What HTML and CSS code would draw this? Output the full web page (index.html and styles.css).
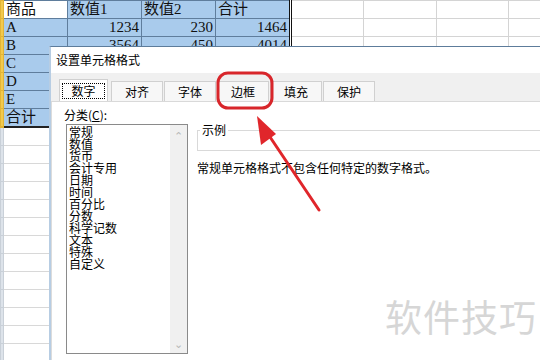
FILE: index.html
```html
<!DOCTYPE html>
<html lang="zh-CN">
<head>
  <meta charset="UTF-8">
  <title>设置单元格格式</title>
  <link rel="stylesheet" href="styles.css">
</head>
<body>
  <div class="screen">
    <table class="sheet">
      <colgroup>
        <col class="c-head"><col class="c-a"><col class="c-b"><col class="c-c"><col class="c-d">
        <col class="c-e"><col class="c-f"><col class="c-g"><col class="c-h">
      </colgroup>
      <tr class="sel">
        <td class="rh"></td><td class="active">商品</td><td>数值1</td><td>数值2</td><td class="last">合计</td>
        <td class="free"></td><td class="free"></td><td class="free"></td><td class="free"></td>
      </tr>
      <tr class="sel">
        <td class="rh"></td><td>A</td><td class="num">1234</td><td class="num">230</td><td class="num last">1464</td>
        <td class="free"></td><td class="free"></td><td class="free"></td><td class="free"></td>
      </tr>
      <tr class="sel">
        <td class="rh"></td><td>B</td><td class="num">3564</td><td class="num">450</td><td class="num last">4014</td>
        <td class="free"></td><td class="free"></td><td class="free"></td><td class="free"></td>
      </tr>
      <tr class="sel"><td class="rh"></td><td>C</td><td></td><td></td><td class="last"></td><td></td><td></td><td></td><td></td></tr>
      <tr class="sel"><td class="rh"></td><td>D</td><td></td><td></td><td class="last"></td><td></td><td></td><td></td><td></td></tr>
      <tr class="sel"><td class="rh"></td><td>E</td><td></td><td></td><td class="last"></td><td></td><td></td><td></td><td></td></tr>
      <tr class="sel bottom"><td class="rh"></td><td>合计</td><td></td><td></td><td class="last"></td><td></td><td></td><td></td><td></td></tr>
      <tr><td class="rh"></td><td></td><td></td><td></td><td></td><td></td><td></td><td></td><td></td></tr>
      <tr><td class="rh"></td><td></td><td></td><td></td><td></td><td></td><td></td><td></td><td></td></tr>
      <tr><td class="rh"></td><td></td><td></td><td></td><td></td><td></td><td></td><td></td><td></td></tr>
      <tr><td class="rh"></td><td></td><td></td><td></td><td></td><td></td><td></td><td></td><td></td></tr>
      <tr><td class="rh"></td><td></td><td></td><td></td><td></td><td></td><td></td><td></td><td></td></tr>
      <tr><td class="rh"></td><td></td><td></td><td></td><td></td><td></td><td></td><td></td><td></td></tr>
      <tr><td class="rh"></td><td></td><td></td><td></td><td></td><td></td><td></td><td></td><td></td></tr>
      <tr><td class="rh"></td><td></td><td></td><td></td><td></td><td></td><td></td><td></td><td></td></tr>
      <tr><td class="rh"></td><td></td><td></td><td></td><td></td><td></td><td></td><td></td><td></td></tr>
      <tr><td class="rh"></td><td></td><td></td><td></td><td></td><td></td><td></td><td></td><td></td></tr>
      <tr><td class="rh"></td><td></td><td></td><td></td><td></td><td></td><td></td><td></td><td></td></tr>
      <tr><td class="rh"></td><td></td><td></td><td></td><td></td><td></td><td></td><td></td><td></td></tr>
      <tr><td class="rh"></td><td></td><td></td><td></td><td></td><td></td><td></td><td></td><td></td></tr>
    </table>

    <div class="dialog">
      <div class="title">设置单元格格式</div>
      <div class="tabs">
        <div class="tab current"><span class="focus">数字</span></div>
        <div class="tab">对齐</div>
        <div class="tab">字体</div>
        <div class="tab">边框</div>
        <div class="tab">填充</div>
        <div class="tab">保护</div>
      </div>
      <div class="page">
        <div class="category">
          <div class="label">分类(<u>C</u>):</div>
          <div class="listbox">
            <ul class="items">
              <li>常规</li>
              <li>数值</li>
              <li>货币</li>
              <li>会计专用</li>
              <li>日期</li>
              <li>时间</li>
              <li>百分比</li>
              <li>分数</li>
              <li>科学记数</li>
              <li>文本</li>
              <li>特殊</li>
              <li>自定义</li>
            </ul>
            <div class="scroll">
              <span class="chev">&#8963;</span>
              <span class="chev">&#8964;</span>
            </div>
          </div>
        </div>
        <div class="detail">
          <fieldset class="sample">
            <legend>示例</legend>
          </fieldset>
          <p class="desc">常规单元格格式不包含任何特定的数字格式。</p>
        </div>
      </div>
    </div>

    <svg class="marks" width="540" height="360" viewBox="0 0 540 360">
      <rect x="218" y="73" width="54" height="35" rx="10" ry="10" fill="none" stroke="#d8262b" stroke-width="3"/>
      <line x1="319" y1="210" x2="268" y2="134" stroke="#e0262b" stroke-width="3" stroke-linecap="round"/>
      <polygon points="257,116 261,145 276,134" fill="#e0262b"/>
    </svg>

    <div class="watermark">软件技巧</div>
  </div>
</body>
</html>
```

FILE: styles.css
```css
body {
  margin: 0;
  background: #fff;
}
.screen {
  position: relative;
  width: 540px;
  height: 360px;
  overflow: hidden;
  font-family: "Noto Sans CJK SC", sans-serif;
}

/* spreadsheet behind */
.sheet {
  border-collapse: collapse;
  table-layout: fixed;
  width: 580px;
  font-family: "Liberation Serif", "Noto Sans CJK SC", serif;
  font-size: 15px;
  color: #111;
}
.c-head { width: 3px; }
.c-a { width: 64px; }
.c-b, .c-c { width: 74px; }
.c-d { width: 75px; }
.c-e, .c-f { width: 73px; }
.c-g { width: 72px; }
.c-h { width: 73px; }
.sheet td {
  height: 17px;
  padding: 0 2px;
  border: 1px solid #d8d8d8;
  line-height: 17px;
  white-space: nowrap;
  overflow: hidden;
}
.sheet td.rh {
  padding: 0;
  background: #dde3ea;
  border-color: #c9d0d8;
}
.sel td {
  background: #a9cbec;
  border-color: #5f7d9c;
}
.sel td.rh {
  background: #f2c94c;
  border-color: #e2b436;
}
.sel td.active {
  background: #fff;
}
.sel td.last {
  border-right: 3px double #111;
}
.sel td.free {
  background: #fff;
  border-color: #d4d4d4;
}
.bottom td {
  border-bottom: 2px solid #222;
}
.sheet td.num {
  text-align: right;
}

/* dialog */
.dialog {
  position: absolute;
  left: 49px;
  top: 46px;
  width: 520px;
  height: 330px;
  background: #fff;
  border-top: 1px solid #5d7c9b;
  border-left: 2px solid #b7cde3;
  font-size: 12px;
  color: #000;
  display: flex;
  flex-direction: column;
}
.title {
  height: 26px;
  line-height: 26px;
  padding-left: 5px;
  font-size: 12px;
}
.tabs {
  height: 28px;
  background: #f0f0f0;
  display: flex;
  align-items: flex-end;
  padding-left: 8px;
  border-bottom: 1px solid #d9d9d9;
}
.tab {
  width: 52px;
  height: 20px;
  line-height: 20px;
  text-align: center;
  background: #f7f7f7;
  border: 1px solid #d0d0d0;
  border-bottom: none;
  margin-right: 1px;
  box-sizing: border-box;
}
.tab.current {
  width: 49px;
  height: 22px;
  line-height: 22px;
  background: #fff;
  margin-right: 3px;
}
.focus {
  display: inline-block;
  width: 41px;
  line-height: 14px;
  border: 1px dotted #000;
}
.page {
  flex: 1;
  display: flex;
  gap: 9px;
  padding: 5px 0 0 12px;
  border-left: 1px solid #dcdcdc;
}
.label {
  line-height: 16px;
  margin-bottom: 1px;
}
.label u {
  text-decoration: underline;
}
.listbox {
  margin-left: 2px;
  width: 120px;
  height: 228px;
  border: 1px solid #8a8a8a;
  display: flex;
}
.items {
  flex: 1;
  list-style: none;
  margin: 0;
  padding: 1px 0 0 2px;
}
.items li {
  line-height: 12px;
  height: 12px;
}
.scroll {
  width: 17px;
  background: #f0f0f0;
  display: flex;
  flex-direction: column;
  justify-content: space-between;
  align-items: center;
  color: #b8b8b8;
  font-size: 11px;
  padding: 2px 0;
}
.detail {
  flex: 1;
  padding-top: 17px;
}
.sample {
  margin: 0;
  padding: 0;
  height: 25px;
  border: 1px solid #d9d9d9;
  border-right: none;
}
.sample legend {
  margin-left: 2px;
  padding: 0 2px;
  line-height: 12px;
}
.desc {
  margin: 9px 0 0;
  line-height: 16px;
}

/* annotations */
.marks {
  position: absolute;
  left: 0;
  top: 0;
}
.watermark {
  position: absolute;
  left: 385px;
  top: 294px;
  font-size: 37px;
  line-height: 44px;
  letter-spacing: 1px;
  color: #d6d6d6;
}
```
